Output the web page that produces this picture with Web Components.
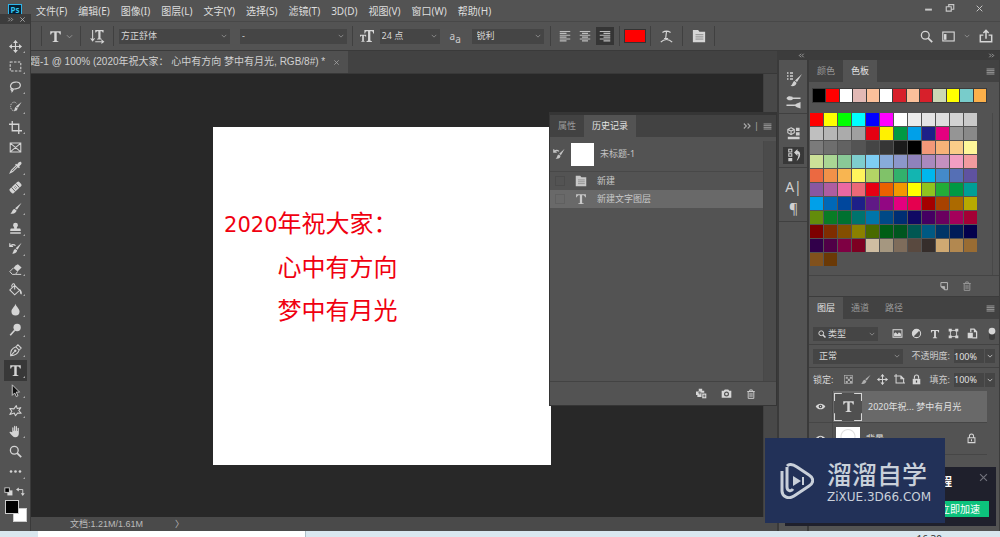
<!DOCTYPE html>
<html lang="zh-CN">
<head>
<meta charset="utf-8">
<title>未标题-1</title>
<style>
html, body { margin: 0; height: 100%; }
body { font: 9px/12px "Noto Sans", "Noto Sans CJK SC", sans-serif; color: #d6d6d6; background: #535353; overflow: hidden; }
</style>
</head>
<body>
<ps-app></ps-app>
<script>
const ICONS = {
  move: '<path d="M8 1v14M1 8h14" stroke-width="1.4"/><path class="f" d="M8 0l3 3.600H5zM8 16l3-3.600H5zM0 8l3.600-3v6zM16 8l-3.600-3v6z"/>',
  marquee: '<rect x="1.500" y="2.500" width="13" height="11" stroke-dasharray="3 1.700" stroke-width="1.300"/>',
  lasso: '<path d="M5 11C0 10 1 3 8 2.500s8 6 2 8c-2 .7-4 .6-5 .5M5 11c-2-1-3.500.5-2 1.500s2.500-.5 2-1.500c0 2 0 3-2 4" stroke-width="1.500"/>',
  quick: '<path d="M9 4C7 1 2 3 2 8c0 4 3 6 6 5" stroke-dasharray="1.500 1"/><path class="f" d="M15.500 2.500L11 9.500 8.500 8zM8 8.600l2.600 1.600C10.500 13 8 14 6 13c1.500-1 .5-3 2-4.400z"/>',
  crop: '<path d="M4 0v12h12M0 4h12v12" stroke-width="1.600"/>',
  frame: '<path d="M1.500 2.500h13v11h-13zM1.500 2.500l13 11M14.500 2.500l-13 11" stroke-width="1.300"/>',
  dropper: '<path d="M9.500 5L3 11.500 1.500 14.500 4.500 13 11 6.500" stroke-width="1.300"/><path class="f" d="M7.500 4.500l1.200-1.200 1.300 1C12 1 14 .5 15 1.500s.5 3-2.500 5l.9 1.200-1.200 1.200z"/>',
  heal: '<g transform="rotate(-42 8 8)"><rect class="f" x="0" y="4.500" width="16" height="7" rx="2"/><path d="M4.500 4.500v7M11.500 4.500v7" stroke="#535353"/><path d="M6.500 7h3M6.500 9h3" stroke="#777"/></g>',
  brush: '<path class="f" d="M15.500 1L9.800 9.500 7.500 7.800zM6.800 8.500l2.400 1.800c.3 2.500-2.700 5-7.700 4 2.700-1.300 2-5 5.300-5.800z"/>',
  stamp: '<path class="f" d="M8 1a3 3 0 0 1 3 3c0 1.500-1.500 2-1.500 4H13c1 0 1.500.7 1.500 3h-13c0-2.300.5-3 1.500-3h3.500c0-2-1.500-2.500-1.500-4a3 3 0 0 1 3-3zM1.500 12.500h13v2h-13z"/>',
  histbrush: '<path class="f" d="M15.500 1L10.500 9.500 8.200 7.800zM7.500 8.500L10 10.300c0 2.700-2.500 4.700-6.500 3.900C6 13 5 9.500 7.500 8.500z"/><path d="M1 5.500c2-3 5-3 7-1M1 1.500v4h4" stroke-width="1.500"/>',
  eraser: '<path class="f" d="M8 3l3-1.500 4.500 4-5 5-5-4.500z"/><path d="M5.500 6L1 10.500l3 3.500h4l2.500-3.500M8 14h7" stroke-width="1.200"/>',
  bucket: '<path d="M7 3l6 6-6 5.500L1 8.500zM4 6C2 2 6-1 7 2.500V8" stroke-width="1.300"/><path class="f" d="M12.500 7l1.500 1c2 2 2.500 6 1 6s-1.500-3-2-4.500z"/>',
  drop: '<path class="f" d="M8 1c1 4 5 6 5 9.500a5 5 0 0 1-10 0C3 7 7 5 8 1z"/>',
  dodge: '<circle class="f" cx="10" cy="5.500" r="4.500"/><path d="M7 9L1.500 15" stroke-width="2"/>',
  pen: '<path d="M2 14.500C1.500 9 4 5 8.500 3.500l4 4C11 12 7.500 14 2 14.500zM2 14.500l5-5.500M9 3l2-2 4 4-2 2" stroke-width="1.300"/><circle class="f" cx="7.700" cy="8.300" r="1.500"/>',
  type: '<path class="f" d="M1.500 1.500h13v4h-1.200c-.3-2-.8-2.500-3.800-2.500v9.500c0 1 .5 1.200 2 1.300v1h-7v-1c1.500-.1 2-.3 2-1.300V3c-3 0-3.500.5-3.800 2.500H1.500z"/>',
  arrow: '<path d="M4 1l9 9H9l2 4.500-2 .9L7 11l-3 3z" fill="#111" stroke-width="1.100"/>',
  shape: '<path d="M9 2l1 3.500 4.500-1L12 8l3 3.500-4.500-.3L8 14.500 6.500 11 1 13l2.500-4L1 5.500 6 6z" stroke-width="1.300" stroke-linejoin="round"/>',
  hand: '<path class="f" d="M4 9V3.500c0-1 1.500-1 1.500 0V7h.7V1.800c0-1 1.500-1 1.500 0V7h.7V2c0-1 1.500-1 1.500 0v5.500h.7V4c0-1 1.500-1 1.500 0v6.500c0 3-1.500 4.500-4.500 4.500C5 15 4 13 .8 9.500c-.6-1.200 1-1.700 1.700-1z"/>',
  zoom: '<circle cx="6.500" cy="6.500" r="4.800" stroke-width="1.600"/><path d="M10 10l5 5" stroke-width="2.200"/>',
  more: '<circle class="f" cx="2.500" cy="8" r="1.600"/><circle class="f" cx="8" cy="8" r="1.600"/><circle class="f" cx="13.500" cy="8" r="1.600"/>',
  defaults: '<rect x="6" y="6" width="9" height="9" class="f"/><rect x="1.500" y="1.500" width="8" height="8" fill="#000" stroke-width="1.500"/>',
  swap: '<path d="M4 4.500h8v8" stroke-width="1.600"/><path class="f" d="M0 4.500L5 1v7zM12 16l-3.500-5h7z"/>',
  down: '<path d="M2 5l6 6 6-6" stroke-width="2"/>',
  orient: '<path d="M3 1v12M.8 10.500L3 13.500l2.200-3M6 14.500h9M13 12.500l2.500 2-2.500 2" stroke-width="1.200"/><path class="f" d="M6 1h9.500v3h-1c-.2-1.300-.7-1.500-2.500-1.500V10c0 1 .3 1 1.500 1.200v.8h-5.500v-.8c1.200-.2 1.500-.2 1.500-1.200V2.500C7.700 2.500 7.200 2.700 7 4H6z"/>',
  tsize: '<path class="f" d="M5 1h11v4h-1c-.2-2-.8-2.300-3.200-2.300v9.800c0 1 .5 1.200 1.700 1.300v1H7.500v-1c1.200-.1 1.700-.3 1.700-1.300V2.700C7 2.700 6.200 3 6 5H5zM0 6.500h7v2.300h-.7C6.200 8 6 7.700 4.400 7.700v5.300c0 .8.300.8 1 .9v.8h-4v-.8c.7-.1 1.100-.1 1.100-.9V7.700C1 7.700.8 8 .7 8.800H0z"/>',
  left: '<path d="M1 2h14M1 4.500h9M1 7h14M1 9.500h9M1 12h14M1 14.500h9" stroke-width="1.500"/>',
  center: '<path d="M1 2h14M4 4.500h8M1 7h14M4 9.500h8M1 12h14M4 14.500h8" stroke-width="1.500"/>',
  right: '<path d="M1 2h14M6 4.500h9M1 7h14M6 9.500h9M1 12h14M6 14.500h9" stroke-width="1.500"/>',
  warp: '<path d="M3 3c3-2 7-2 10 0M8 2l-1 8M5 10.500h5M1 15c4-4.500 10-4.500 14 0" stroke-width="1.400"/>',
  panel: '<path class="f" d="M1 1h6l1.500 2H15v12H1z"/><path d="M4 6.500h9M4 9h9M4 11.500h9" stroke="#858585"/>',
  workspace: '<rect x="1" y="2.500" width="14" height="11" stroke-width="1.400"/><path class="f" d="M2.500 5h3v7h-3z"/>',
  share: '<path d="M5 7H1.500v7.500h13V7H11M8 11V2M5 4.500L8 1.500l3 3" stroke-width="1.700"/>',
  collapse: '<path d="M7 4L3 8l4 4M13 4L9 8l4 4" stroke-width="1.700"/>',
  expand: '<path d="M3 4l4 4-4 4M9 4l4 4-4 4" stroke-width="1.700"/>',
  close: '<path d="M3 3l10 10M13 3L3 13" stroke-width="1.700"/>',
  min: '<path d="M2 10h12" stroke-width="3.500"/>',
  restore: '<path d="M2 6h8v7H2zM6 6V2.500h8V10h-4" stroke-width="1.800"/>',
  menu: '<path d="M1 3.500h14M1 6.500h14M1 9.500h14M1 12.500h14" stroke-width="1.500"/>',
  presets: '<path d="M1 2h1.500M4 2h3M1 5h1.500M4 5h3M1 8h1.500M4 8h3" stroke-width="1.300"/><path class="f" d="M16 3l-5 8-2-1.500zM8.500 10l2 1.700c0 2.300-2.500 4-6 3.300 2-1 2-4.300 4-5z"/>',
  brushes: '<path d="M5 4.500h10.500M.5 12h9" stroke-width="1.800"/><path class="f" d="M.5 4.500C2 2 4 2 7 3v3C4 7 2 7 .5 4.500zM8.500 12l3-2 4-1.500v7l-4-1.500z"/>',
  cube: '<path d="M5 1l4 2v4L5 9.500 1 7V3zM1 3l4 2 4-2M5 5v4" stroke-width="1.300"/><path class="f" d="M11 1h4.500v4H11zM11 6.500h4.500v4H11zM1 12h14.500v3H1z"/>',
  history: '<path d="M2 1.500h3.500v3H2zM2 6.500h3.500v3H2z" stroke-width="1.200"/><path class="f" d="M1.500 11.500h4.500v3.500H1.500zM8 5l4-4v2.500c4 0 4.500 7-1 11.500C13 10 14 6.500 12 6.500V9z"/>',
  newdoc: '<path d="M3 9V2.500h10.500V14H9M9 14V9H3z" stroke-width="1.600"/><path class="f" d="M3 9h6v5z"/>',
  trash: '<path d="M2 4h12M6 4V1.500h4V4M3.500 4v11h9V4M6.500 6v7M9.500 6v7" stroke-width="1.400"/>',
  camera: '<path class="f" d="M1 4h3l1.500-2h5L12 4h3v10H1z"/><circle cx="8" cy="8.700" r="2.800" stroke="#535353" stroke-width="1.700"/>',
  newstate: '<path class="f" d="M4 1h5v3h3v3H8v6H2v-3H0V5h4z"/><path class="f" d="M9 8h6v7H9z"/><path d="M3 7h5M5.500 4.500v5M12 9.500v4M10 11.500h4" stroke="#535353"/>',
  image: '<rect x="1.500" y="2.500" width="13" height="11" stroke-width="1.500"/><path class="f" d="M3 12V8l2.500-2L8 9l2-3 3 2.500V12z"/>',
  adjust: '<circle cx="8" cy="8" r="6" stroke-width="1.500"/><path class="f" d="M12.300 3.700A6 6 0 0 0 3.700 12.300z"/>',
  bounds: '<path d="M3.500 3.500h9v9h-9z" stroke-width="1.300"/><path class="f" d="M1 1h4.500v4H1zM10.500 1H15v4h-4.500zM1 11h4.500v4H1zM10.500 11H15v4h-4.500z"/>',
  smart: '<path d="M5.500 6V1.500h5l3.500 4v9H8" stroke-width="1.800"/><path class="f" d="M10 1l4.500 5H10zM1 7h7.500v8H1z"/>',
  toggle: '<rect x="4" y="1" width="8" height="15" rx="3" fill="#3c3c3c" stroke="none"/><circle class="f" cx="8" cy="4" r="4.500"/>',
  checker: '<rect x="2" y="2" width="12" height="12"/><path class="f" d="M4 4h3v3H4zM10 4h3v3h-3zM7 7h3v3H7zM4 10h3v3H4zM10 10h3v3h-3z"/>',
  artboard: '<path d="M0 3h10l4 4v6M10 2v5h5M3 0v13h13" stroke-width="1.500"/>',
  lock: '<path d="M5 7V4.500a3 3 0 0 1 6 0V7" stroke-width="1.700"/><path class="f" d="M2.500 7h11v8h-11z"/><path d="M8 9.500v3" stroke="#444" stroke-width="1.800"/>',
  lockline: '<path d="M5 7V4.500a3 3 0 0 1 6 0V7M3 7h10v7H3zM8 9v3" stroke-width="1.500"/>',
  eye: '<path d="M1 8c3.500-5.500 10.500-5.500 14 0-3.500 5.500-10.500 5.500-14 0z" class="f"/><circle cx="8" cy="8" r="2.600" fill="#444" stroke="none"/><circle class="f" cx="8" cy="8" r="1"/>',
  lens: '<circle cx="6.500" cy="6.500" r="4.800" stroke-width="2"/><path d="M10 10l5 5" stroke-width="3"/>',
  corners: '<path d="M.3 4.500V.3h4.200M11.500 .3h4.200v4.200M15.700 11.500v4.200h-4.200M4.500 15.700H.3v-4.200" stroke-width=".6"/>'
};

const BASE = `
*{box-sizing:border-box}
button,select,input{font:inherit;color:inherit;margin:0;padding:0;border:0;background:none;border-radius:0;outline:0;min-width:0}
button{display:flex;align-items:center;justify-content:center;white-space:nowrap}
`;
function define(tag, css, html) {
  customElements.define(tag, class extends HTMLElement {
    constructor() {
      super();
      this.attachShadow({ mode: 'open' }).innerHTML =
        `<style>${BASE}${css}</style>` + (typeof html === 'function' ? html(this) : html);
    }
  });
}
const icon = (name, size = 12) => `<ps-icon name="${name}" size="${size}"></ps-icon>`;
const iconButton = (name, label, size = 12, cls = '') =>
  `<button class="${cls}" aria-label="${label}">${icon(name, size)}</button>`;

define('ps-icon', `
:host{display:block;flex:none;line-height:0}
svg{display:block;fill:none;stroke:currentColor;overflow:visible}
.f{fill:currentColor;stroke:none}`,
  el => `<svg width="${el.getAttribute('size')}" height="${el.getAttribute('size')}" viewBox="0 0 16 16" aria-hidden="true">${ICONS[el.getAttribute('name')]}</svg>`);

/* Drop-down with a chevron at its right end */
define('ps-select', `
:host{display:grid;height:15px;background:#454545;align-items:center}
select{grid-area:1/1;width:100%;height:100%;appearance:none;padding-left:var(--inset,2px)}
ps-icon{grid-area:1/1;justify-self:end;margin-right:3px;color:#999;pointer-events:none}`,
  el => `<select aria-label="${el.getAttribute('label')}"><option>${el.getAttribute('value')}</option></select>${icon('down', 6)}`);

define('ps-menubar', `
:host{display:flex;height:22px;align-items:center;font-size:10px;border-bottom:1px solid #484848;color:#dedede}
.logo{width:14px;height:13px;margin:0 14px 0 8px;border:1px solid #2fb4e8;background:#062033;color:#31c5f0;font:bold 8px/10px "Noto Sans",sans-serif;text-align:center}
nav{display:flex;gap:11px;flex:1}
.win{display:flex;height:16px;align-self:flex-start;align-items:center;gap:12px;margin-right:16px;color:#c8c8c8}
.win button:last-child{margin-left:8px}`,
  `<div class="logo">Ps</div><nav>${['文件(F)', '编辑(E)', '图像(I)', '图层(L)', '文字(Y)', '选择(S)', '滤镜(T)', '3D(D)', '视图(V)', '窗口(W)', '帮助(H)'].map(t => `<button>${t}</button>`).join('')}</nav>
  <div class="win">${iconButton('min', '最小化', 9)}${iconButton('restore', '还原', 10)}${iconButton('close', '关闭', 9)}</div>`);

define('ps-options', `
:host{display:flex;height:29px;align-items:center;padding-left:41px;border-bottom:1px solid #3a3a3a}
.g{display:flex;align-items:center;justify-content:center;height:20px;border-left:1px solid #404040;flex:none}
.type{width:39px;gap:4px}.ori{width:33px}.font{width:239px;gap:10px}.size{width:198px;gap:6px}.al{width:69px;gap:2px}
.al button{width:18px;height:18px;color:#bdbdbd}.al .on{background:#353535}
.n{width:31px}.m{width:32px}
.color{width:22px;height:14px;background:#f00;border:1px solid #333}
.end{flex:1;justify-content:flex-end;gap:9px;padding-right:7px}
.aa{font-size:10px;margin:0 2px 0 4px;color:#ccc;width:14px}
.aa sub{font-size:10px;line-height:6px;vertical-align:-3px}
.dim{color:#999}`,
  `<div class="g type">${iconButton('type', '文字工具', 13)}${iconButton('down', '工具预设', 7, 'dim')}</div>
  <div class="g ori">${iconButton('orient', '切换文本取向', 14)}</div>
  <div class="g font"><ps-select style="width:111px" label="字体" value="方正舒体"></ps-select><ps-select style="width:107px" label="字体样式" value="-"></ps-select></div>
  <div class="g size">${icon('tsize', 14)}<ps-select style="width:60px" label="字号" value="24 点"></ps-select><span class="aa">a<sub>a</sub></span><ps-select style="width:72px;--inset:5px" label="消除锯齿" value="锐利"></ps-select></div>
  <div class="g al">${iconButton('left', '左对齐')}${iconButton('center', '居中对齐')}${iconButton('right', '右对齐', 12, 'on')}</div>
  <div class="g n"><button class="color" aria-label="文本颜色"></button></div>
  <div class="g m">${iconButton('warp', '变形文字', 13)}</div>
  <div class="g m">${iconButton('panel', '字符面板', 14)}</div>
  <div class="g end">${iconButton('zoom', '搜索', 13)}${iconButton('workspace', '工作区', 13)}${iconButton('down', '选择工作区', 6, 'dim')}${iconButton('share', '共享', 14)}</div>`);

const TOOLS = [['move', '移动'], ['marquee', '矩形选框'], ['lasso', '套索'], ['quick', '快速选择'], ['crop', '裁剪'], ['frame', '图框'], ['dropper', '吸管'], ['heal', '修复画笔'], ['brush', '画笔'], ['stamp', '仿制图章'], ['histbrush', '历史记录画笔'], ['eraser', '橡皮擦'], ['bucket', '油漆桶'], ['drop', '模糊'], ['dodge', '减淡'], ['pen', '钢笔'], ['type', '横排文字'], ['arrow', '路径选择'], ['shape', '自定形状'], ['hand', '抓手'], ['zoom', '缩放'], ['more', '更多']];
define('ps-toolbox', `
:host{display:flex;flex-direction:column;width:31px;background:#535353;border-right:1px solid #3a3a3a}
header{display:flex;height:10px;background:#3c3c3c;justify-content:space-between;align-items:center;padding:0 4px 0 7px;color:#bbb;flex:none}
.list{flex:1;min-height:0;display:flex;flex-direction:column;margin-top:12px}
.list button{flex:1;min-height:0;margin:0 3px 0 4px;position:relative;color:#d4d4d4}
.list .on{background:#383838}
.list .sub::after{content:"";position:absolute;right:2px;bottom:3px;border:1px solid #aaa;border-left-color:transparent;border-top-color:transparent}
.quick{display:flex;justify-content:space-between;height:18px;align-items:center;padding:0 5px 0 4px}
.colors{display:grid;height:31px;padding-left:5px;flex:none}
.colors button{grid-area:1/1;width:14px;height:14px;background:#000;border:1px solid #ccc}
.colors .bg{background:#fff;margin:8px 0 0 8px}`,
  `<header>${icon('expand', 7)}${icon('close', 7)}</header>
  <div class="list">${TOOLS.map(([n, l]) => iconButton(n, l, 13, (n === 'type' ? 'on ' : '') + (n === 'frame' || n === 'zoom' ? '' : 'sub'))).join('')}</div>
  <div class="quick">${iconButton('defaults', '默认颜色', 9)}${iconButton('swap', '切换颜色', 9)}</div>
  <div class="colors"><button class="bg" aria-label="背景色"></button><button aria-label="前景色"></button></div>`);

define('ps-document', `
:host{display:flex;flex-direction:column;min-width:0;background:#424242}
.tabs{display:flex;height:23px;flex:none;border-bottom:1px solid #383838}
.tab{display:flex;align-items:center;gap:8px;padding:0 8px 0 30px;background:#505050;font:10px/14px "Liberation Sans","Noto Sans CJK SC",sans-serif;white-space:pre;color:#d0d0d0}
.tab button{color:#aaa}
.view{flex:1;min-height:0;display:flex}
.stage{flex:1;display:flex;align-items:center;justify-content:center;background:#282828}
.bar{width:14px;background:#484848;border-left:1px solid #404040}
.paper{width:338px;height:338px;background:#fff;flex:none;color:#f00010;font:24px/43px "DejaVu Sans","Noto Sans CJK SC",sans-serif;padding:76px 153px 0 0;text-align:right}
.paper p{margin:0;white-space:nowrap}
.paper span{font-size:21px}
footer{display:flex;height:14px;flex:none;align-items:center;background:#4a4a4a;padding-left:70px;gap:32px;color:#bbb;font-family:"Liberation Sans","Noto Sans CJK SC",sans-serif}`,
  `<div class="tabs"><div class="tab"><span>题-1 @ 100% (2020年祝大家： 心中有方向 梦中有月光, RGB/8#) *</span>${iconButton('close', '关闭文档', 7)}</div></div>
  <div class="view"><div class="stage"><article class="paper"><p><span>2020</span>年祝大家：</p><p>心中有方向</p><p>梦中有月光</p></article></div><div class="bar"></div></div>
  <footer><span>文档:1.21M/1.61M</span><span>〉</span></footer>`);

/* Tab strip plus slotted body, shared by every panel */
define('ps-panel', `
:host{display:flex;flex-direction:column;background:#535353}
header{display:flex;height:22px;flex:none;background:#424242;align-items:stretch}
header>button{padding:0 8px;color:#999}
header>.on{background:#535353;color:#e4e4e4}
.end{margin-left:auto;display:flex;align-items:center;gap:4px;padding-right:4px;color:#aaa}`,
  el => `<header role="tablist">${el.getAttribute('tabs').split(',').map(t => t[0] === '*' ? `<button role="tab" aria-selected="true" class="on">${t.slice(1)}</button>` : `<button role="tab">${t}</button>`).join('')}<div class="end"><slot name="end"></slot>${iconButton('menu', '面板菜单', 9)}</div></header><slot></slot>`);

define('ps-history', `
:host{display:block;border:1px solid #353535;border-top-width:3px;background:#535353}
ps-panel{height:100%}
.body{flex:1;display:flex;min-height:0}
.list{flex:1}.bar{width:13px;background:#4b4b4b;border-left:1px solid #484848;margin-top:4px}
.snap{display:flex;align-items:center;height:35px;padding-left:3px;gap:6px;border-bottom:1px solid #484848;color:#c4c4c4}
.thumb{width:23px;height:23px;background:#fff}
.row{display:flex;align-items:center;height:18px;padding-left:5px;gap:10px;color:#c8c8c8}
.row i{width:10px;height:10px;border:1px solid #4b4b4b}
.row.on{background:#696969}.row.on i{border-color:#606060}
footer{display:flex;height:24px;flex:none;border-top:1px solid #434343;align-items:center;justify-content:flex-end;gap:14px;padding-right:20px}
.more{display:flex;align-items:center;gap:2px}`,
  `<ps-panel tabs="属性,*历史记录"><span slot="end" class="more">${icon('expand', 10)}<span>|</span></span>
  <div class="body"><div class="list"><div class="snap">${icon('histbrush', 12)}<div class="thumb"></div><span>未标题-1</span></div>
  <div class="row"><i></i>${icon('panel', 12)}<span>新建</span></div><div class="row on"><i></i>${icon('type', 12)}<span>新建文字图层</span></div></div><div class="bar"></div></div>
  <footer>${iconButton('newstate', '从当前状态创建新文档', 11)}${iconButton('camera', '创建新快照', 11)}${iconButton('trash', '删除', 10)}</footer></ps-panel>`);

define('ps-strip', `
:host{display:block;background:#535353;border:solid #3a3a3a;border-width:0 2px}
.g{padding:8px 0 1px;border-bottom:1px solid #404040}
button{width:21px;height:22px;margin-left:4px;color:#d0d0d0;font-size:14px}
.on{background:linear-gradient(#383838,#383838) center/100% 17px no-repeat}`,
  `<div class="g">${iconButton('presets', '画笔设置', 16)}${iconButton('brushes', '画笔', 15)}</div>
  <div class="g">${iconButton('cube', '属性', 13)}${iconButton('history', '历史记录', 14, 'on')}</div>
  <div class="g"><button aria-label="字符">A|</button><button aria-label="段落">¶</button></div>`);

const RECENT = '000,f00,fff,e2b9b5,fbc09a,fff,d7202b,fbc09a,d7202b,cbd8b5,ff0,78cccb,fcb04a'.split(',');
const SWATCHES = ('f00,ff0,0f0,0ff,00f,f0f,fff,ececec,e4e4e4,dedede,d2d2d2,c9c9c9,' +
  'bfbfbf,b6b6b6,ababab,a0a0a0,e60012,fff100,009944,00a0e9,1d2088,e4007f,959595,898989,' +
  '7b7b7b,6e6e6e,626262,545454,454545,363636,1b1b1b,000,f29878,f7b278,facd89,fff799,' +
  'cce198,aad694,89c997,7ecece,7ecef4,88abda,8c97cb,8f82bc,aa89bd,c490bf,f19ec2,f29b9f,' +
  'eb6941,f19149,f8b551,fff45c,b3d465,80c269,32b16c,13b5b1,00b7ee,448aca,556fb5,5f52a0,' +
  '8957a1,ae5da1,ea68a2,eb6877,e60012,eb6100,f39800,ff0,8fc31f,22ac38,009944,009e96,' +
  '00a0e9,0068b7,00479d,1d2088,601986,920783,e4007f,e5004f,a40000,a84200,ac6a00,b7aa00,' +
  '638c0b,097c25,007130,00736d,0075a9,004986,002e73,100964,440062,6a005f,a4005b,a40035,' +
  '7d0000,7f2d00,834e00,8a8000,486a00,005e15,00561f,005752,005982,003567,001c58,03004c,' +
  '31004a,500047,7e0043,7d0022,cfbda2,a59780,7e6c5b,59493f,362e2b,cfa972,b28850,996c33,' +
  '81511c,6a3906').split(',');
const chips = list => list.map(c => `<button aria-label="#${c}" style="background:#${c}"></button>`).join('');
define('ps-swatches', `
:host{display:block}
ps-panel{height:236px}
.recent{display:grid;grid-template-columns:repeat(13,1fr);gap:1px;margin:7px 13px 11px 4px}
.recent button{height:13px;outline:1px solid #3c3c3c}
.all{flex:1;display:grid;grid-template-columns:repeat(12,13px);grid-auto-rows:13px;gap:1px;margin-left:1px;align-content:start;border-right:1px solid #484848;margin-right:6px}
footer{display:flex;height:21px;border-top:1px solid #444;align-items:center;justify-content:flex-end;gap:13px;padding:0 27px 1px 0}
footer :last-child{opacity:.75}`,
  `<ps-panel tabs="颜色,*色板"><div class="recent">${chips(RECENT)}</div><div class="all">${chips(SWATCHES)}</div>
  <footer>${iconButton('newdoc', '新建色板', 10)}${iconButton('trash', '删除色板', 10)}</footer></ps-panel>`);

define('ps-layers', `
:host{display:flex}
ps-panel{flex:1;min-width:0}
.r{display:flex;align-items:center;height:23px;flex:none;border-bottom:1px solid #424242;padding:0 4px 0 4px}
.filter{height:26px;padding:4px 1px 0 4px}
.search{display:flex;align-items:center;width:65px;background:#454545;padding-left:5px}
.search ps-select{flex:1;height:14px}
.kinds{flex:1;display:flex;align-items:center;justify-content:space-between;padding-left:14px}
.mode{width:90px;--inset:6px}
label{margin-left:auto;display:flex;align-items:center;gap:4px;color:#ccc}
input{width:30px;height:14px;background:#454545;color:#e0e0e0}
.chev{width:10px;height:14px;background:#454545;margin-left:1px}
.locks{display:flex;gap:6px;padding-left:10px}
.locks button:first-child,.locks button:nth-child(2){opacity:.7}
.last{border-bottom:0}
.layer{display:flex;align-items:center;height:32px;flex:none;margin-right:12px;border-bottom:1px solid #464646}
.layer>.v{width:24px;height:100%;background:#535353;border-right:1px solid #484848}
.layer.on{background:#696969}
.t{width:28px;height:28px;display:grid;place-items:center;background:#505050;margin-left:1px}
.t>*{grid-area:1/1}
.name{margin-left:6px;flex:1;white-space:nowrap;color:#e0e0e0}
.bg{width:24px;height:24px;background:radial-gradient(circle at 50% 40%,#fff 6px,#ddd 7px,#fff 8px);margin-left:3px}
.layer>ps-icon{margin-right:10px}`,
  `<ps-panel tabs="*图层,通道,路径">
  <div class="r filter"><div class="search">${icon('lens', 8)}<ps-select label="图层过滤" value="类型"></ps-select></div>
  <div class="kinds">${iconButton('image', '像素图层', 11)}${iconButton('adjust', '调整图层', 11)}${iconButton('type', '文字图层', 10)}${iconButton('bounds', '形状图层', 11)}${iconButton('smart', '智能对象', 11)}${iconButton('toggle', '过滤开关', 12)}</div></div>
  <div class="r"><ps-select class="mode" label="混合模式" value="正常"></ps-select><label>不透明度: <input value="100%"></label>${iconButton('down', '不透明度选项', 6, 'chev')}</div>
  <div class="r last"><span>锁定:</span><div class="locks">${iconButton('checker', '锁定透明像素', 11)}${iconButton('brush', '锁定图像像素', 11)}${iconButton('move', '锁定位置', 11)}${iconButton('artboard', '防止自动嵌套', 11)}${iconButton('lock', '锁定全部', 11)}</div><label>填充: <input value="100%"></label>${iconButton('down', '填充选项', 6, 'chev')}</div>
  <div class="layer on">${iconButton('eye', '图层可见性', 11, 'v')}<div class="t">${icon('corners', 28)}${icon('type', 13)}</div><span class="name">2020年祝... 梦中有月光</span></div>
  <div class="layer">${iconButton('eye', '图层可见性', 11, 'v')}<div class="bg"></div><span class="name">背景</span>${icon('lockline', 11)}</div>
  </ps-panel>`);

define('ps-dock', `
:host{display:grid;grid-template:9px 1fr/32px 1fr;background:#3c3c3c;padding-right:1px}
.h{display:flex;align-items:center;justify-content:flex-end;padding-right:4px;color:#bbb}
.col{display:flex;flex-direction:column;gap:1px;min-height:0}
ps-layers{flex:1;min-height:0}`,
  `<div class="h">${icon('collapse', 7)}</div><div class="h">${icon('expand', 7)}</div><ps-strip></ps-strip><div class="col"><ps-swatches></ps-swatches><ps-layers></ps-layers></div>`);

define('ps-toast', `
:host{display:flex;flex-direction:column;align-items:flex-end;justify-content:space-between;background:#1f202c;padding:5px 7px 9px;color:#fff;font-size:11px}
.top{display:flex;gap:26px;align-items:flex-start;color:#71727c}
.top b{color:#fff;font:bold 11px/18px "Noto Sans CJK SC",sans-serif}
.go{background:#0cc27c;width:50px;height:16px;font-size:10px;justify-content:flex-end;padding-right:9px}`,
  `<div class="top"><b>程</b>${iconButton('close', '关闭通知', 11)}</div><button class="go">立即加速</button>`);

define('ps-brand', `
:host{display:flex;align-items:center;gap:13px;background:#223158;padding-left:15px;color:#c9d0da}
svg{flex:none}
strong{display:block;font:500 25px/28px "Noto Sans CJK SC",sans-serif;margin-bottom:4px}
span{display:block;font:12px/12px "DejaVu Sans",sans-serif}`,
  `<svg width="34" height="36" viewBox="0 0 34 36" fill="none" stroke="currentColor" stroke-width="3" aria-hidden="true"><path d="M7 4v20c0 4 4 5 6 2M7 3c3-3 7-1 10 1l12 8c5 3 5 8 0 11L14 33C8 37 2 33 2 28V8"/><path d="M13 13l8 5-8 5z" fill="currentColor" stroke="none"/><path d="M23 14v8" stroke-width="2"/></svg>
  <div><strong>溜溜自学</strong><span>ZiXUE.3D66.COM</span></div>`);

define('ps-taskbar', `
:host{display:flex;height:6px;background:#d9e7ef;overflow:hidden;color:#333}
.win{width:268px;background:#fff;margin-left:38px;border-right:1px solid #aebfc8}
time{margin-left:auto;padding:2px 58px 0 0;font-size:10px;line-height:12px}`,
  `<div class="win"></div><time>16:30</time>`);

define('ps-app', `
:host{display:flex;flex-direction:column;height:100vh;position:relative;overflow:hidden}
main{flex:1;min-height:0;display:flex;position:relative}
ps-document{flex:1}
ps-dock{width:223px;flex:none}
ps-history{position:absolute;right:223px;top:61px;width:228px;height:294px}
ps-toolbox{position:absolute;left:0;top:14px;bottom:6px}
ps-toast{position:absolute;right:4px;bottom:11px;width:211px;height:59px}
ps-brand{position:absolute;right:55px;bottom:14px;width:180px;height:85px}`,
  `<ps-menubar></ps-menubar><ps-options></ps-options>
  <main><ps-document></ps-document><ps-dock></ps-dock><ps-history></ps-history></main>
  <ps-taskbar></ps-taskbar><ps-toolbox></ps-toolbox><ps-toast></ps-toast><ps-brand></ps-brand>`);
</script>
</body>
</html>
